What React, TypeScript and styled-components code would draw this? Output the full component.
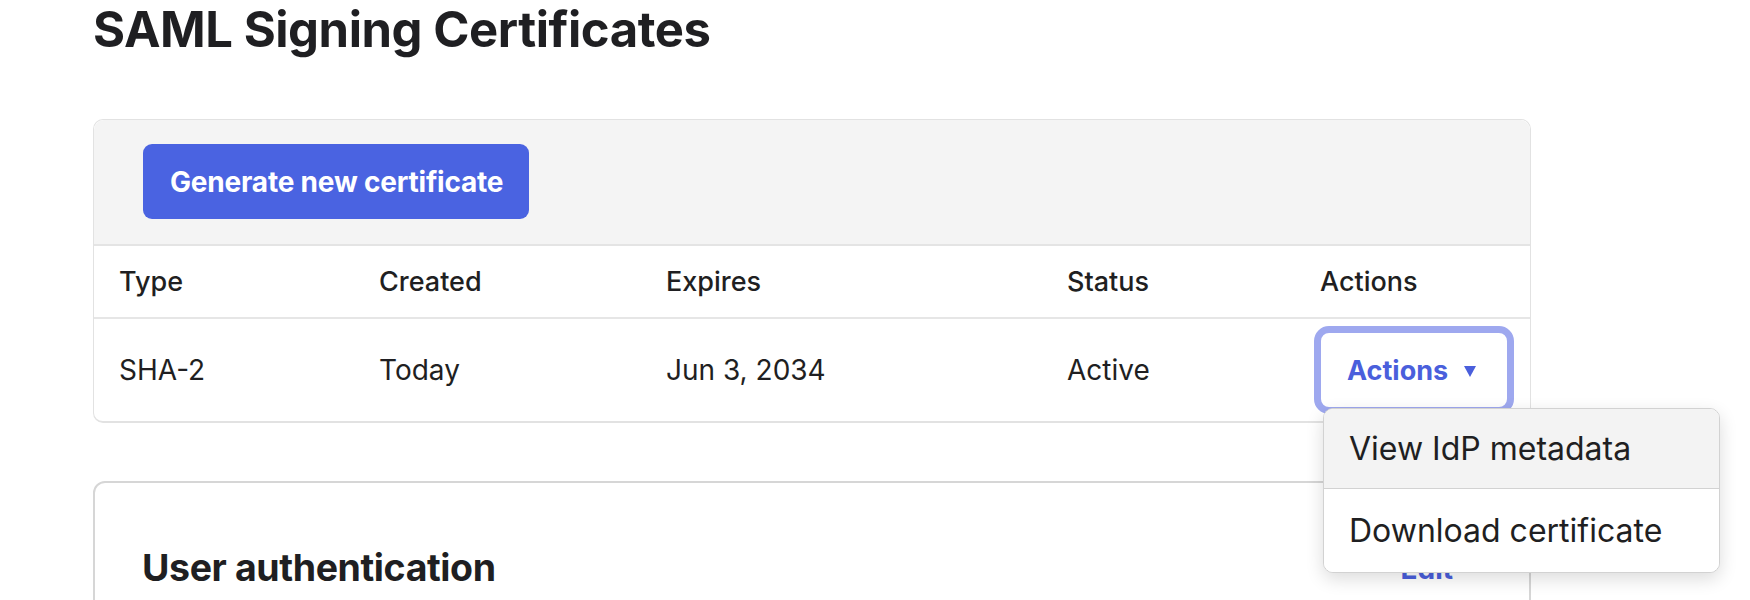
import React from "react";
import styled, { createGlobalStyle } from "styled-components";

const Global = createGlobalStyle`
  html, body { margin: 0; padding: 0; background: #ffffff; }
  body { font-family: Inter, "Noto Sans", sans-serif; color: #1f1f22; overflow: hidden; }
  * { box-sizing: border-box; }
`;

const Page = styled.div`
  width: 1750px;
  height: 600px;
  padding: 0 0 0 93px;
  overflow: hidden;
`;

const Title = styled.h1`
  margin: 0;
  font-size: 49px;
  line-height: 60px;
  font-weight: 700;
  letter-spacing: -0.45px;
  color: #1f1f22;
`;

const Card = styled.section`
  width: 1438px;
  margin-top: 59px;
  border: 1px solid #e2e2e2;
  border-bottom-width: 2px;
  border-radius: 10px;
  background: #fff;
`;

const Toolbar = styled.div`
  background: #f4f4f4;
  border-radius: 10px 10px 0 0;
  padding: 24px 0 25px 49px;
  border-bottom: 2px solid #e4e4e4;
`;

const PrimaryButton = styled.button`
  height: 75px;
  padding: 0 26px 0 27px;
  border: none;
  border-radius: 9px;
  background: #4a63e1;
  color: #fff;
  font-family: inherit;
  font-size: 28px;
  font-weight: 700;
  letter-spacing: -0.2px;
  cursor: pointer;
`;

const Row = styled.div<{ $header?: boolean }>`
  display: grid;
  grid-template-columns: 260px 287px 401px 253px 1fr;
  height: ${(p) => (p.$header ? "73px" : "102px")};
  align-items: center;
  border-bottom: ${(p) => (p.$header ? "2px solid #e6e6e6" : "none")};
`;

const Cell = styled.div<{ $header?: boolean }>`
  padding-left: 25px;
  font-size: ${(p) => (p.$header ? "27px" : "28px")};
  font-weight: ${(p) => (p.$header ? 500 : 400)};
  color: #1f1f22;
`;

const ActionsWrap = styled.div`
  position: relative;
  margin-left: 19px;
  width: 200px;
`;

const ActionsButton = styled.button`
  display: flex;
  align-items: center;
  gap: 16px;
  width: 200px;
  height: 88px;
  padding: 0 0 0 26px;
  border: 7px solid #9ea8ef;
  border-radius: 15px;
  background: #fff;
  color: #4a5fdc;
  font-family: inherit;
  font-size: 27px;
  font-weight: 700;
  cursor: pointer;
`;

const Caret = styled.span`
  width: 0;
  height: 0;
  border-left: 6px solid transparent;
  border-right: 6px solid transparent;
  border-top: 11px solid #4a5fdc;
  margin-top: 2px;
`;

const Menu = styled.ul`
  position: absolute;
  left: 9px;
  top: 82px;
  width: 397px;
  margin: 0;
  padding: 0;
  list-style: none;
  background: #fff;
  border: 1px solid #d2d2d2;
  border-radius: 10px;
  box-shadow: 0 6px 18px rgba(0, 0, 0, 0.14);
  overflow: hidden;
  z-index: 5;
`;

const MenuItem = styled.li<{ $active?: boolean }>`
  height: ${(p) => (p.$active ? "80px" : "83px")};
  display: flex;
  align-items: center;
  padding-left: 25px;
  font-size: 32px;
  font-weight: 400;
  color: #1f1f22;
  background: ${(p) => (p.$active ? "#f3f3f3" : "#fff")};
  border-bottom: ${(p) => (p.$active ? "1px solid #d2d2d2" : "none")};
`;

const SecondCard = styled.section`
  width: 1438px;
  height: 200px;
  margin-top: 58px;
  border: 2px solid #d6d6d6;
  border-radius: 12px;
  padding: 63px 76px 0 47px;
  display: flex;
  justify-content: space-between;
  align-items: flex-start;
`;

const SectionTitle = styled.h2`
  margin: 0;
  font-size: 37.5px;
  line-height: 44px;
  font-weight: 700;
  letter-spacing: -0.4px;
  color: #1f1f22;
`;

const EditLink = styled.a`
  font-size: 28px;
  font-weight: 700;
  color: #4a5fdc;
  text-decoration: none;
  margin-top: 6px;
`;

export default function App() {
  return (
    <>
      <Global />
      <Page>
        <Title>SAML Signing Certificates</Title>
        <Card>
          <Toolbar>
            <PrimaryButton>Generate new certificate</PrimaryButton>
          </Toolbar>
          <Row $header>
            <Cell $header>Type</Cell>
            <Cell $header>Created</Cell>
            <Cell $header>Expires</Cell>
            <Cell $header>Status</Cell>
            <Cell $header>Actions</Cell>
          </Row>
          <Row>
            <Cell>SHA-2</Cell>
            <Cell>Today</Cell>
            <Cell>Jun 3, 2034</Cell>
            <Cell>Active</Cell>
            <div>
              <ActionsWrap>
                <ActionsButton>
                  Actions
                  <Caret />
                </ActionsButton>
                <Menu>
                  <MenuItem $active>View IdP metadata</MenuItem>
                  <MenuItem>Download certificate</MenuItem>
                </Menu>
              </ActionsWrap>
            </div>
          </Row>
        </Card>
        <SecondCard>
          <SectionTitle>User authentication</SectionTitle>
          <EditLink href="#">Edit</EditLink>
        </SecondCard>
      </Page>
    </>
  );
}
